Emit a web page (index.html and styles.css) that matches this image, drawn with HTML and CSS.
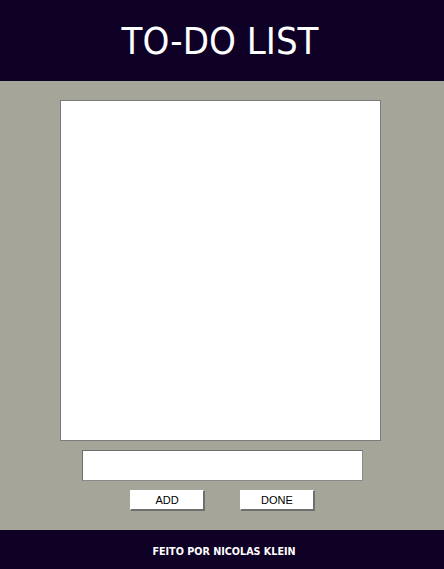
FILE: index.html
```html
<!DOCTYPE html>
<html>
<head>
<meta charset="utf-8">
<title>To-Do List</title>
<link rel="stylesheet" href="styles.css">
</head>
<body>
<header class="top">
  <h1 class="title">TO-DO LIST</h1>
</header>
<main class="main">
  <div class="list"></div>
  <input class="entry" type="text">
  <div class="actions">
    <button class="btn">ADD</button>
    <button class="btn">DONE</button>
  </div>
</main>
<footer class="bottom">FEITO POR NICOLAS KLEIN</footer>
</body>
</html>
```
FILE: styles.css
```css
html, body {
  margin: 0;
  padding: 0;
  height: 100%;
}
body {
  background: #a5a699;
  font-family: "DejaVu Sans", sans-serif;
  display: flex;
  flex-direction: column;
}
.top {
  background: #0f0026;
  height: 81px;
  display: flex;
  align-items: center;
  justify-content: center;
}
.title {
  margin: 0;
  color: #ffffff;
  font-family: "DejaVu Sans Condensed", "DejaVu Sans", sans-serif;
  font-weight: normal;
  font-size: 38px;
  line-height: 1;
  padding-right: 4px;
}
.main {
  flex: 1;
  display: flex;
  flex-direction: column;
  align-items: center;
  padding-top: 19px;
}
.list {
  box-sizing: border-box;
  width: 321px;
  height: 341px;
  background: #ffffff;
  border: 1px solid #7b7b7b;
  margin-right: 3px;
}
.entry {
  box-sizing: border-box;
  margin: 9px 0 0 1px;
  width: 281px;
  height: 31px;
  background: #ffffff;
  border: 1px solid #6e6e6e;
  border-right-color: #8a8a8a;
  border-bottom-color: #8a8a8a;
  padding: 0 4px;
  outline: none;
}
.actions {
  display: flex;
  gap: 35px;
  margin-top: 9px;
  margin-left: 1px;
}
.btn {
  box-sizing: border-box;
  width: 75px;
  height: 21px;
  background: #ffffff;
  border: 1px solid #ffffff;
  border-right: 2px solid #6f6f6f;
  border-bottom: 2px solid #6f6f6f;
  padding: 0;
  font-family: "Liberation Sans", Arial, sans-serif;
  font-size: 11px;
  color: #000000;
}
.bottom {
  background: #0f0026;
  height: 39px;
  display: flex;
  align-items: center;
  justify-content: center;
  color: #ffffff;
  font-family: "DejaVu Sans Condensed", "DejaVu Sans", sans-serif;
  font-weight: bold;
  font-size: 10.7px;
  padding-top: 3px;
  padding-left: 4px;
  box-sizing: border-box;
}
```
